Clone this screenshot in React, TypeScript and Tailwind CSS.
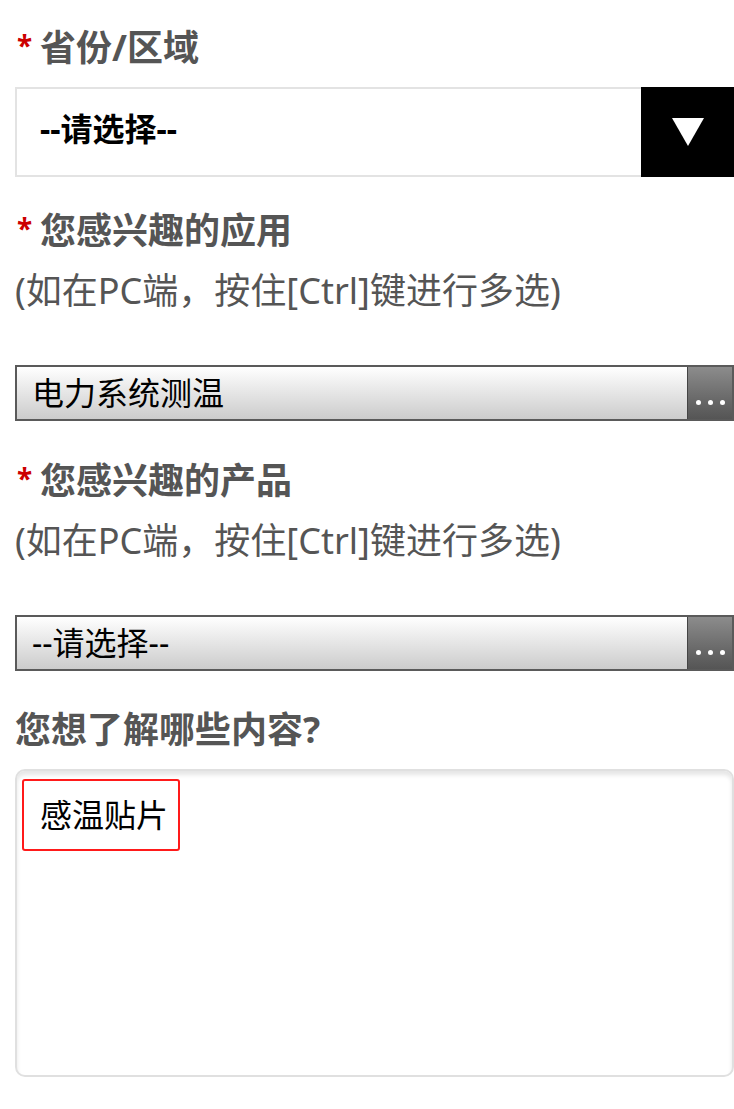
const Label = ({ text, required = true }: { text: string; required?: boolean }) => {
  return (
    <div className="flex items-start text-[36px] leading-[51px] font-bold text-[#555555]">
      {required && (
        <span className="w-[25px] pl-[2px] pt-[3px] text-[28px] leading-[40px] text-[#cc0000]">*</span>
      )}
      <span>{text}</span>
    </div>
  );
};

const Hint = () => (
  <div className="text-[36px] leading-[69px] text-[#555555]">(如在PC端，按住[Ctrl]键进行多选)</div>
);

const MultiSelect = ({ value }: { value: string }) => (
  <div className="flex h-[56px] border-2 border-[#5a5a5a] bg-gradient-to-b from-white to-[#cccccc]">
    <div className="flex flex-1 items-center pl-[15px] text-[32px] text-black">{value}</div>
    <div className="flex w-[45px] items-end justify-center gap-[7px] pb-[14px] bg-gradient-to-b from-[#8c8c8c] to-[#555555] border-l border-[#444444]">
      <span className="h-[5px] w-[5px] rounded-full bg-white" />
      <span className="h-[5px] w-[5px] rounded-full bg-white" />
      <span className="h-[5px] w-[5px] rounded-full bg-white" />
    </div>
  </div>
);

export default function App() {
  return (
    <div className="min-h-[1109px] bg-white pl-[15px] pr-0 pt-[22px] font-['Noto_Sans','Noto_Sans_CJK_SC',sans-serif]">
      <Label text="省份/区域" />
      <div className="mt-[14px] flex h-[90px] border-2 border-[#e3e3e3] bg-white">
        <div className="flex flex-1 items-center pb-[6px] pl-[23px] text-[32px] font-bold text-black">--请选择--</div>
        <div className="-my-[2px] -mr-[2px] flex w-[93px] items-center justify-center bg-black">
          <svg width="32" height="28" viewBox="0 0 32 28">
            <polygon points="0,0 32,0 16,28" fill="#ffffff" />
          </svg>
        </div>
      </div>

      <div className="mt-[28px]">
        <Label text="您感兴趣的应用" />
        <Hint />
      </div>
      <div className="mt-[40px]">
        <MultiSelect value="电力系统测温" />
      </div>

      <div className="mt-[34px]">
        <Label text="您感兴趣的产品" />
        <Hint />
      </div>
      <div className="mt-[40px]">
        <MultiSelect value="--请选择--" />
      </div>

      <div className="mt-[33px]">
        <Label text="您想了解哪些内容?" required={false} />
      </div>
      <div className="mt-[14px] h-[308px] rounded-[10px] border-2 border-[#e0e0e0] bg-white pl-[5px] pt-[8px] shadow-[inset_0_4px_4px_rgba(0,0,0,0.1)]">
        <div className="flex h-[72px] w-[158px] items-center rounded-[3px] border-2 border-[#ff1a1a] pl-[16px] text-[32px] text-black">
          感温贴片
        </div>
      </div>
    </div>
  );
}
